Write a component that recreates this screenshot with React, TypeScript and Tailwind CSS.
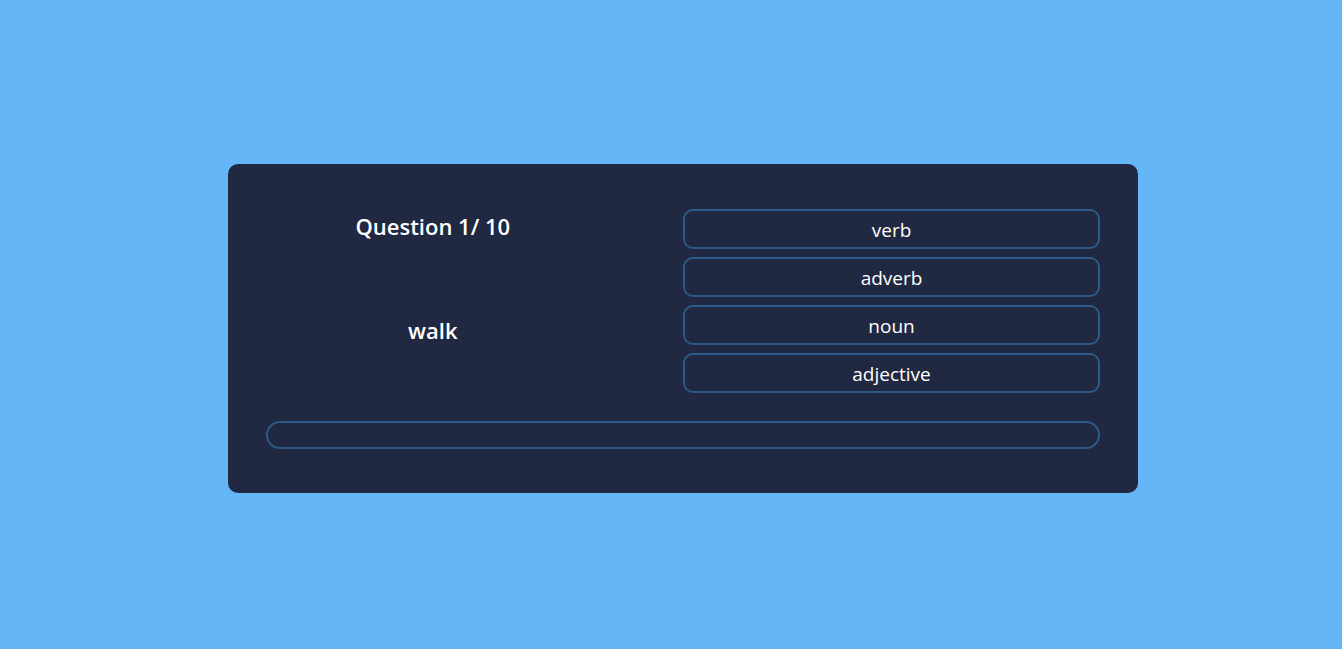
const options = ['verb', 'adverb', 'noun', 'adjective']

export default function App() {
  return (
    <div
      className="flex min-h-screen items-center justify-center bg-[#64b6f7] pt-[8px] pl-6"
      style={{ fontFamily: '"Open Sans", "Noto Sans", sans-serif' }}
    >
      <div className="flex w-[910px] flex-col gap-[28px] rounded-[10px] bg-[#202842] px-[38px] pt-[45px] pb-[44px] text-white">
        <div className="flex justify-between">
          {/* question side */}
          <div className="flex w-2/5 flex-col items-center pt-[2px]">
            <div className="text-[22px] leading-[30px] font-semibold">Question 1/ 10</div>
            <div className="mt-[74px] text-[22px] leading-[30px] font-semibold">walk</div>
          </div>

          {/* answers */}
          <div className="flex w-1/2 flex-col gap-[8px]">
            {options.map((opt) => (
              <button
                key={opt}
                className="h-[40px] rounded-[10px] border-2 border-[#2c5a86] bg-transparent pt-[2px] text-[19px] text-white"
              >
                {opt}
              </button>
            ))}
          </div>
        </div>

        <div className="h-[28px] rounded-full border-2 border-[#2c5a86]" />
      </div>
    </div>
  )
}
